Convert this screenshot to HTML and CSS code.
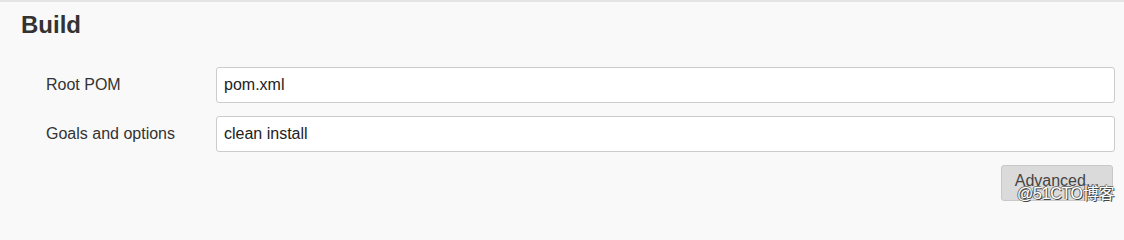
FILE: index.html
```html
<!DOCTYPE html>
<html lang="en">
<head>
<meta charset="utf-8">
<title>Build</title>
<link rel="stylesheet" href="styles.css">
</head>
<body>
<section class="section">
  <h2 class="section-header">Build</h2>
  <div class="form">
    <div class="row">
      <label class="label" for="pom">Root POM</label>
      <input class="field" id="pom" type="text" value="pom.xml">
    </div>
    <div class="row">
      <label class="label" for="goals">Goals and options</label>
      <input class="field" id="goals" type="text" value="clean install">
    </div>
    <div class="actions">
      <div class="btn-wrap">
        <button class="btn" type="button">Advanced...</button>
        <span class="watermark">@51CTO博客</span>
      </div>
    </div>
  </div>
</section>
</body>
</html>
```

FILE: styles.css
```css
html {
  background: #f9f9f9;
}
body {
  margin: 0;
  padding: 0;
  font-family: "Liberation Sans", Arial, sans-serif;
  color: #333;
  background: #f9f9f9;
  border-top: 2px solid #e4e4e4;
}
.section {
  padding: 9px 9px 5px 21px;
}
.section-header {
  margin: 0;
  font-size: 24px;
  font-weight: bold;
  line-height: 28px;
  color: #333;
}
.form {
  margin-top: 28px;
  padding-left: 25px;
  display: flex;
  flex-direction: column;
  gap: 13px;
}
.row {
  display: grid;
  grid-template-columns: 170px 1fr;
  align-items: center;
}
.label {
  font-size: 16px;
  color: #333;
}
.field {
  box-sizing: border-box;
  width: 100%;
  height: 36px;
  margin: 0;
  padding: 0 7px;
  border: 1px solid #ccc;
  border-radius: 3px;
  background: #fff;
  font-family: "Liberation Sans", Arial, sans-serif;
  font-size: 16px;
  color: #222;
  outline: none;
}
.actions {
  display: flex;
  justify-content: flex-end;
  padding-right: 2px;
}
.btn-wrap {
  position: relative;
}
.btn {
  box-sizing: border-box;
  width: 112px;
  height: 36px;
  padding: 0 0 4px;
  border: 1px solid #c8c8c8;
  border-radius: 3px;
  background: #dadada;
  font-family: "Liberation Sans", Arial, sans-serif;
  font-size: 16px;
  color: #444;
}
.watermark {
  position: absolute;
  left: 16px;
  top: 15px;
  font-family: "Liberation Sans", "Noto Sans CJK SC", sans-serif;
  font-size: 16px;
  letter-spacing: -0.3px;
  color: #fff;
  white-space: nowrap;
  text-shadow: 1px 1px 0 #444, -1px 0 0 #666, 0 -1px 0 #777;
}
```
